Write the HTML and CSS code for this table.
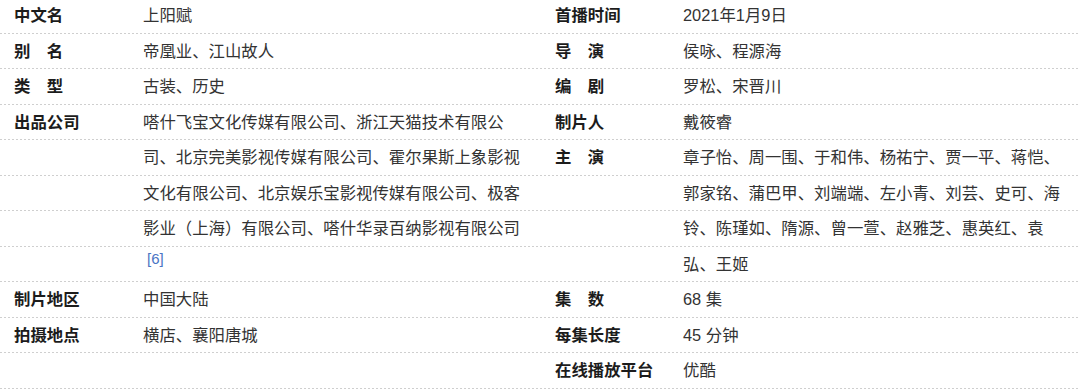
FILE: index.html
```html
<!DOCTYPE html>
<html lang="zh-CN">
<head>
<meta charset="utf-8">
<title>上阳赋</title>
<link rel="stylesheet" href="styles.css">
</head>
<body>
<div class="info">
  <dl class="col col-left">
    <div class="row"><dt class="label">中文名</dt><dd class="value">上阳赋</dd></div>
    <div class="row"><dt class="label">别　名</dt><dd class="value">帝凰业、江山故人</dd></div>
    <div class="row"><dt class="label">类　型</dt><dd class="value">古装、历史</dd></div>
    <div class="row"><dt class="label">出品公司</dt><dd class="value">嗒什飞宝文化传媒有限公司、浙江天猫技术有限公<br>司、北京完美影视传媒有限公司、霍尔果斯上象影视<br>文化有限公司、北京娱乐宝影视传媒有限公司、极客<br>影业（上海）有限公司、嗒什华录百纳影视有限公司<br><span class="ref">[6]</span></dd></div>
    <div class="row"><dt class="label">制片地区</dt><dd class="value">中国大陆</dd></div>
    <div class="row"><dt class="label">拍摄地点</dt><dd class="value">横店、襄阳唐城</dd></div>
  </dl>
  <dl class="col col-right">
    <div class="row"><dt class="label">首播时间</dt><dd class="value">2021年1月9日</dd></div>
    <div class="row"><dt class="label">导　演</dt><dd class="value">侯咏、程源海</dd></div>
    <div class="row"><dt class="label">编　剧</dt><dd class="value">罗松、宋晋川</dd></div>
    <div class="row"><dt class="label">制片人</dt><dd class="value">戴筱睿</dd></div>
    <div class="row"><dt class="label">主　演</dt><dd class="value">章子怡、周一围、于和伟、杨祐宁、贾一平、蒋恺、<br>郭家铭、蒲巴甲、刘端端、左小青、刘芸、史可、海<br>铃、陈瑾如、隋源、曾一萱、赵雅芝、惠英红、袁<br>弘、王姬</dd></div>
    <div class="row"><dt class="label">集　数</dt><dd class="value">68 集</dd></div>
    <div class="row"><dt class="label">每集长度</dt><dd class="value">45 分钟</dd></div>
    <div class="row"><dt class="label">在线播放平台</dt><dd class="value">优酷</dd></div>
  </dl>
</div>
</body>
</html>
```
FILE: styles.css
```css
html, body {
  margin: 0;
  padding: 0;
  background: #fff;
  overflow: hidden;
}

body {
  font-family: "Liberation Sans", "Noto Sans CJK SC", sans-serif;
  font-size: 16.4px;
  color: #333;
}

.info {
  display: grid;
  grid-template-columns: 541px 539px;
  margin-top: -2px;
  min-height: 396px;
  line-height: 35.5px;
  background-color: #fff;
  background-image:
    linear-gradient(to bottom,
      #fff 0, #fff 35px,
      transparent 35px, transparent 36px,
      #fff 36px, #fff 70px,
      transparent 70px, transparent 71px),
    linear-gradient(to right, #cfcfcf 0, #cfcfcf 2px, #fff 2px, #fff 4px);
  background-size: 100% 71px, 4px 100%;
  background-repeat: repeat, repeat;
}

.col {
  margin: 0;
  padding: 0 0 0 14px;
}

.row {
  display: flex;
}

.label {
  flex: none;
  width: 129px;
  margin: 0;
  font-weight: 700;
  color: #1c1c1c;
  white-space: nowrap;
}

.col-right .label {
  width: 128px;
}

.value {
  margin: 0;
  white-space: nowrap;
  color: #333;
}

.ref {
  font-size: 15px;
  line-height: 1;
  color: #4a74c4;
  margin-left: 4px;
  vertical-align: 6px;
}
```
